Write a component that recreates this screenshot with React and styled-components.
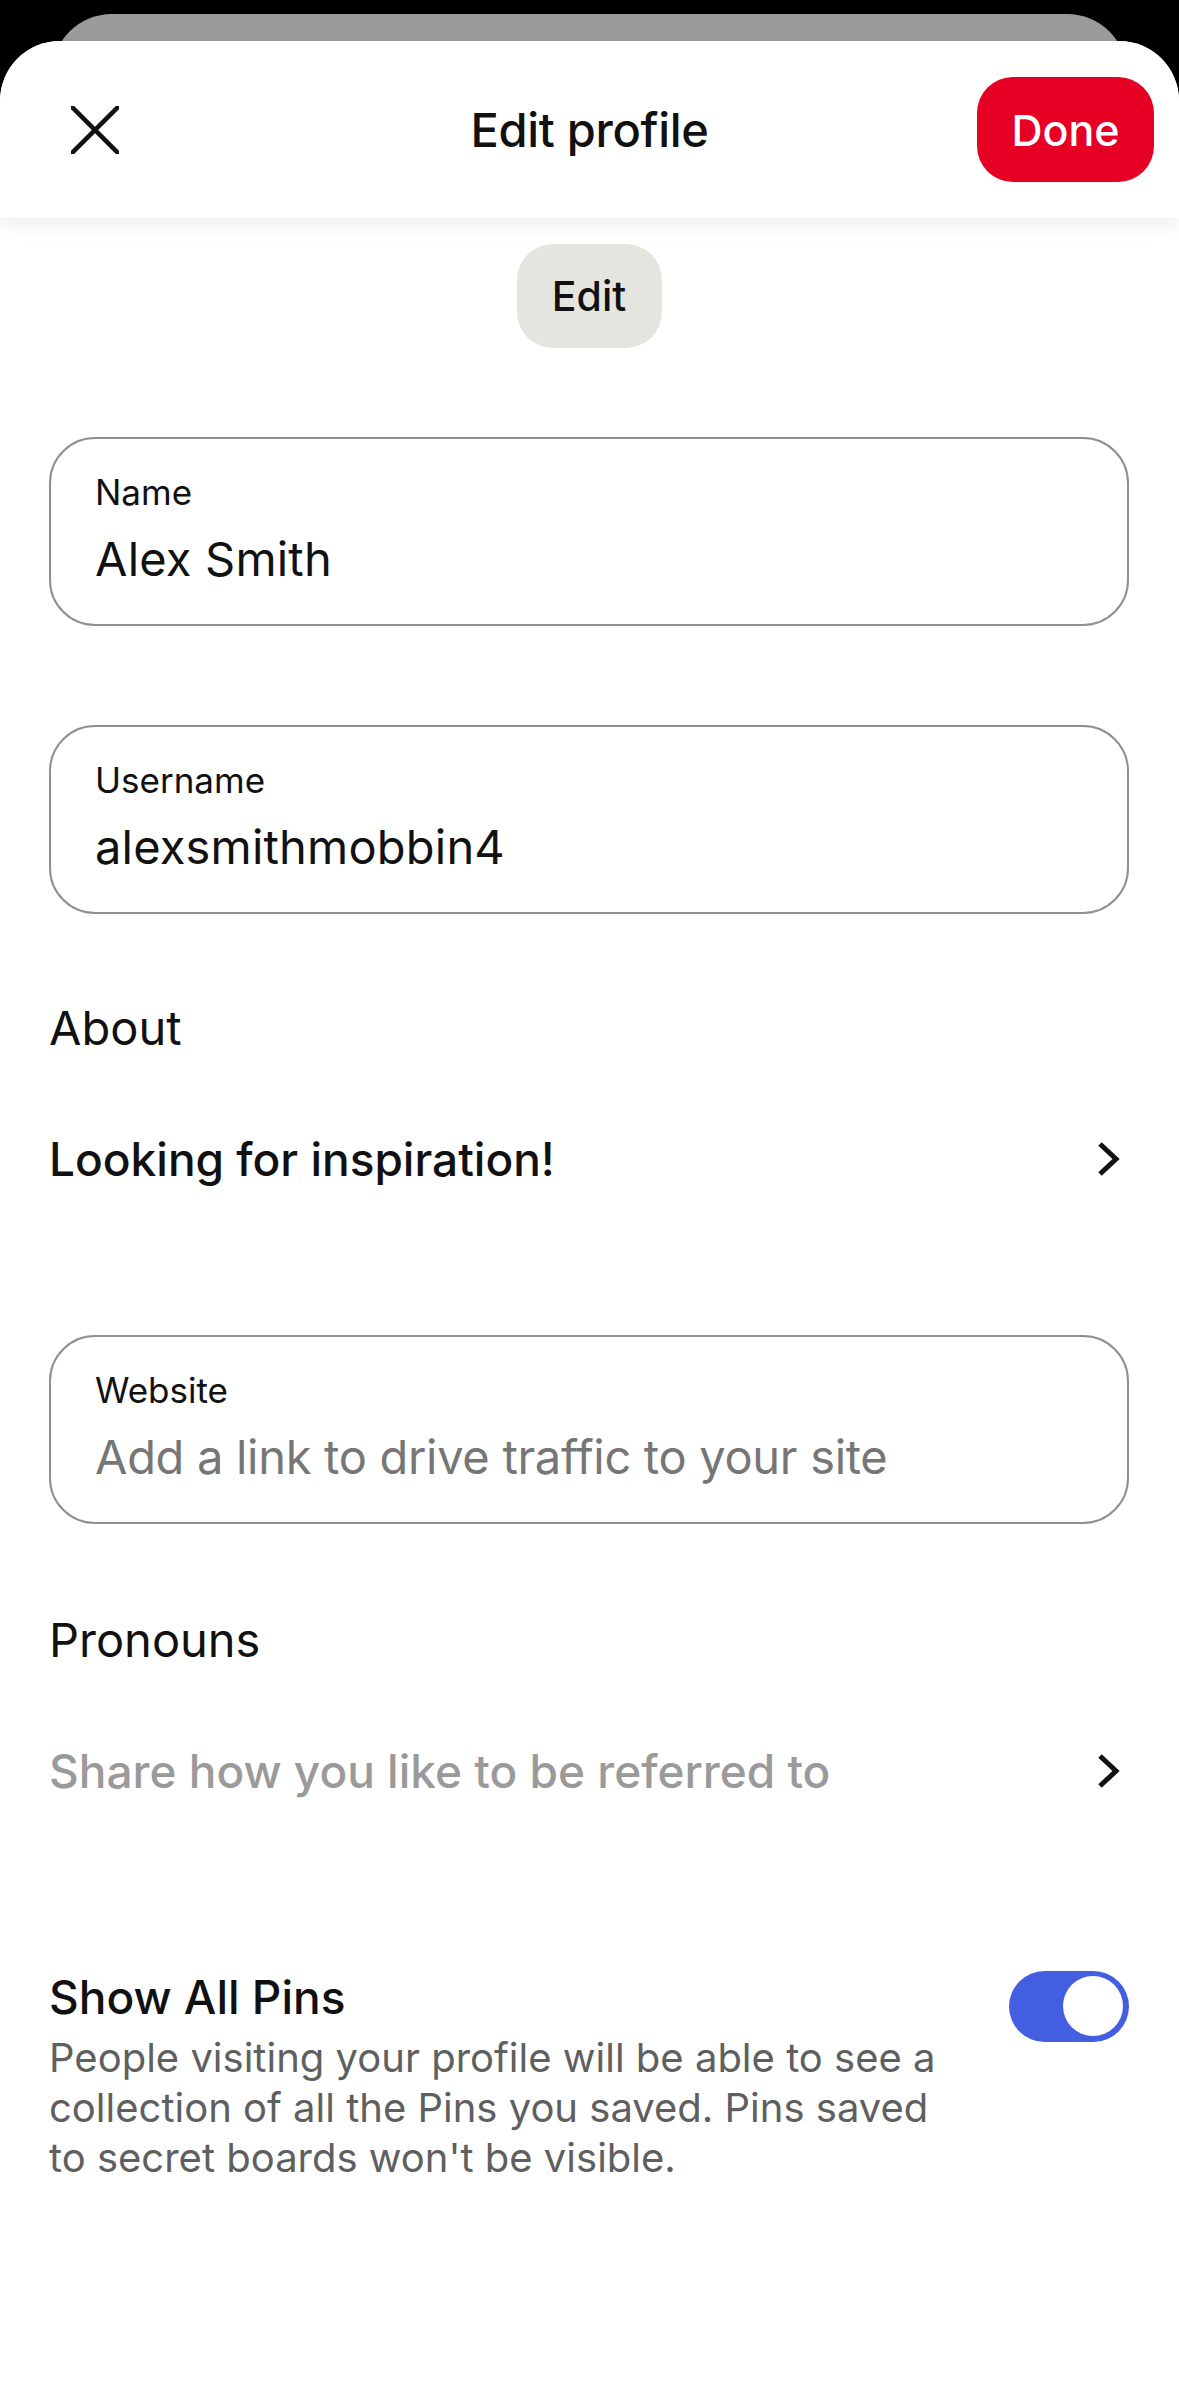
import React from 'react'
import styled, { createGlobalStyle } from 'styled-components'

const GlobalStyle = createGlobalStyle`
  body {
    margin: 0;
    background: #000;
    font-family: 'Inter', 'Roboto', 'Liberation Sans', sans-serif;
    color: #111;
  }
`

const Screen = styled.div`
  min-height: 2396px;
  display: flex;
  flex-direction: column;
  background: #000;
`

const BackCard = styled.div`
  height: 100px;
  margin: 14px 52px 0;
  background: #9b9b9b;
  border-radius: 60px 60px 0 0;
`

const Sheet = styled.div`
  position: relative;
  flex: 1;
  margin-top: -73px;
  background: #fff;
  border-radius: 60px 60px 0 0;
`

const Header = styled.div`
  position: relative;
  z-index: 1;
  height: 177px;
  display: grid;
  grid-template-columns: 1fr auto 1fr;
  align-items: center;
  padding: 0 25px;
  background: #fff;
  border-radius: 60px 60px 0 0;
  box-shadow: 0 8px 20px rgba(0, 0, 0, 0.07);
`

const IconButton = styled.button`
  justify-self: start;
  width: 94px;
  height: 94px;
  margin-left: 23px;
  padding: 0;
  border: none;
  background: none;
  display: flex;
  align-items: center;
  justify-content: center;
`

const Title = styled.h1`
  margin: 0;
  font-size: 47px;
  font-weight: 500;
  letter-spacing: -0.3px;
`

const DoneButton = styled.button`
  justify-self: end;
  width: 177px;
  height: 105px;
  border: none;
  border-radius: 36px;
  background: #e60023;
  color: #fff;
  font-family: inherit;
  font-size: 43px;
  font-weight: 500;
`

const Content = styled.div`
  display: flex;
  flex-direction: column;
  padding: 26px 50px 120px 49px;
`

const EditButton = styled.button`
  align-self: center;
  width: 145px;
  height: 104px;
  border: none;
  border-radius: 36px;
  background: #e5e5e0;
  color: #111;
  font-family: inherit;
  font-size: 41px;
  font-weight: 500;
`

const Field = styled.div`
  margin-top: ${(p) => p.$gap}px;
  height: 189px;
  box-sizing: border-box;
  border: 2px solid #8f8f8f;
  border-radius: 46px;
  padding: 33px 0 0 44px;
  display: flex;
  flex-direction: column;
  gap: 19px;
`

const FieldLabel = styled.div`
  font-size: 35px;
  line-height: 40px;
`

const FieldValue = styled.div`
  font-size: 47px;
  line-height: 56px;
  color: ${(p) => (p.$placeholder ? '#767676' : '#111')};
  letter-spacing: ${(p) => (p.$placeholder ? '-0.3px' : '0.2px')};
`

const SectionLabel = styled.div`
  margin-top: ${(p) => p.$gap}px;
  font-size: 47px;
  line-height: 56px;
`

const LinkRow = styled.div`
  margin-top: 75px;
  display: flex;
  align-items: center;
  justify-content: space-between;
  height: 56px;
  padding-right: 8px;
`

const LinkText = styled.div`
  font-size: 46px;
  font-weight: 500;
  color: ${(p) => (p.$muted ? '#9a9a9a' : '#111')};
`

const ToggleSection = styled.div`
  margin-top: 170px;
  display: flex;
  align-items: flex-start;
  justify-content: space-between;
`

const ToggleText = styled.div`
  max-width: 900px;
`

const ToggleTitle = styled.div`
  font-size: 46px;
  line-height: 56px;
  font-weight: 500;
`

const ToggleDesc = styled.div`
  margin-top: 8px;
  font-size: 40px;
  line-height: 50px;
  color: #5f5f5f;
`

const Switch = styled.div`
  flex-shrink: 0;
  margin-top: 2px;
  width: 120px;
  height: 71px;
  box-sizing: border-box;
  border-radius: 36px;
  background: #435ee0;
  padding: 5px 6px;
  display: flex;
  justify-content: ${(p) => (p.$on ? 'flex-end' : 'flex-start')};
`

const Knob = styled.div`
  width: 60px;
  height: 60px;
  border-radius: 50%;
  background: #fff;
`

const CloseIcon = () => (
  <svg width="48" height="48" viewBox="0 0 48 48" fill="none">
    <path d="M1 1 L47 47 M47 1 L1 47" stroke="#111" strokeWidth="4.5" strokeLinecap="square" />
  </svg>
)

const Chevron = () => (
  <svg width="24" height="34" viewBox="0 0 24 34" fill="none">
    <path d="M3 2 L19 17 L3 32" stroke="#111" strokeWidth="5" strokeLinejoin="miter" />
  </svg>
)

export default function App() {
  return (
    <Screen>
      <GlobalStyle />
      <BackCard />
      <Sheet>
        <Header>
          <IconButton aria-label="Close">
            <CloseIcon />
          </IconButton>
          <Title>Edit profile</Title>
          <DoneButton>Done</DoneButton>
        </Header>
        <Content>
          <EditButton>Edit</EditButton>

          <Field $gap={89}>
            <FieldLabel>Name</FieldLabel>
            <FieldValue>Alex Smith</FieldValue>
          </Field>

          <Field $gap={99}>
            <FieldLabel>Username</FieldLabel>
            <FieldValue>alexsmithmobbin4</FieldValue>
          </Field>

          <SectionLabel $gap={86}>About</SectionLabel>
          <LinkRow>
            <LinkText>Looking for inspiration!</LinkText>
            <Chevron />
          </LinkRow>

          <Field $gap={148}>
            <FieldLabel>Website</FieldLabel>
            <FieldValue $placeholder>Add a link to drive traffic to your site</FieldValue>
          </Field>

          <SectionLabel $gap={88}>Pronouns</SectionLabel>
          <LinkRow>
            <LinkText $muted>Share how you like to be referred to</LinkText>
            <Chevron />
          </LinkRow>

          <ToggleSection>
            <ToggleText>
              <ToggleTitle>Show All Pins</ToggleTitle>
              <ToggleDesc>
                People visiting your profile will be able to see a collection of all the Pins you
                saved. Pins saved to secret boards won't be visible.
              </ToggleDesc>
            </ToggleText>
            <Switch $on>
              <Knob />
            </Switch>
          </ToggleSection>
        </Content>
      </Sheet>
    </Screen>
  )
}
